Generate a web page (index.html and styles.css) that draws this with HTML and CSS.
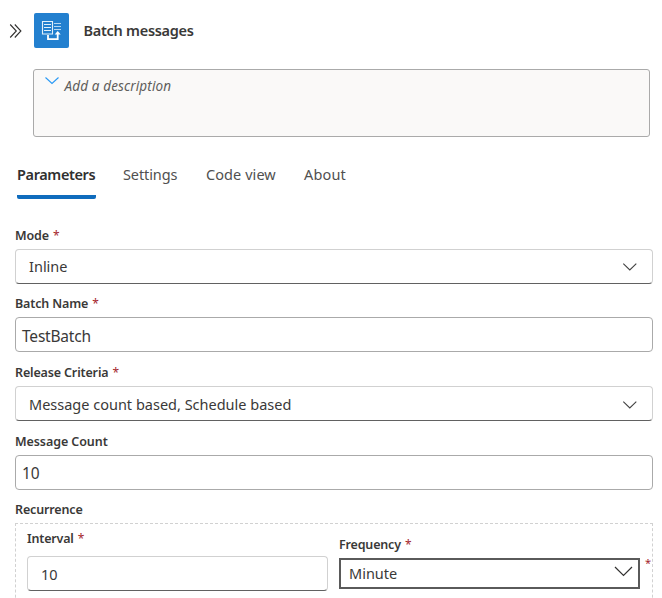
FILE: index.html
```html
<!DOCTYPE html>
<html lang="en">
<head>
<meta charset="utf-8">
<title>Batch messages</title>
<link rel="stylesheet" href="styles.css">
</head>
<body>
<main class="panel">
  <header class="header">
    <svg class="collapse" width="14" height="16" viewBox="0 0 14 16"><path d="M1.200 1.500 7.300 8 1.200 14.500M5.800 1.500 11.900 8 5.800 14.500"/></svg>
    <svg class="logo" width="35" height="35" viewBox="0 0 35 35">
      <rect width="35" height="35" rx="2" fill="#2380cf"/>
      <path d="M8.500 8.500h10v12.500h-10zM10 11.500h7M10 14.500h7M10 17.500h7" fill="none" stroke="#e2f0fb" stroke-width="1.100"/>
      <path d="M20 10.500h7M20 13.500h7M20 16.500h7" fill="none" stroke="#b5d7f2" stroke-width="1.200"/>
      <path d="M14 22v4.200h9.700V21" fill="none" stroke="#fff" stroke-width="1.800"/>
      <path d="M20.700 21.500 23.700 18l3 3.500z" fill="#fff"/>
    </svg>
    <h1 class="title">Batch messages</h1>
  </header>
  <div class="description">
    <svg class="desc-chevron" width="14" height="8" viewBox="0 0 14 8"><path d="M.5.5 7 6.500 13.500.5"/></svg>
    <span class="placeholder">Add a description</span>
  </div>
  <nav class="tabs">
    <span class="tab active">Parameters</span>
    <span class="tab settings">Settings</span>
    <span class="tab code">Code view</span>
    <span class="tab about">About</span>
  </nav>
  <form class="fields">
    <div class="label first"><span>Mode</span><b>*</b></div>
    <div class="control select mode"><span>Inline</span><svg class="chevron" width="15" height="8" viewBox="0 0 15 8"><path d="M1.300 .7 7.800 7 14.300 .7"/></svg></div>
    <div class="label"><span>Batch Name</span><b>*</b></div>
    <div class="control input"><span>TestBatch</span></div>
    <div class="label after-input"><span>Release Criteria</span><b>*</b></div>
    <div class="control select"><span>Message count based, Schedule based</span><svg class="chevron low" width="15" height="8" viewBox="0 0 15 8"><path d="M1.300 .7 7.800 7 14.300 .7"/></svg></div>
    <div class="label count"><span>Message Count</span></div>
    <div class="control input amount"><span>10</span></div>
    <div class="label"><span>Recurrence</span></div>
    <div class="recurrence">
      <div class="interval">
        <div class="sublabel"><span>Interval</span><b>*</b></div>
        <div class="control select narrow"><span>10</span></div>
      </div>
      <div class="frequency">
        <div class="sublabel"><span>Frequency</span><b>*</b></div>
        <div class="combo"><span>Minute</span><svg class="chevron dark" width="19" height="11" viewBox="0 0 19 11"><path d="M1 1 9.500 9.500 18 1"/></svg></div>
      </div>
      <span class="required">*</span>
    </div>
  </form>
</main>
</body>
</html>
```
FILE: styles.css
```css
* { box-sizing: border-box; }
body { margin: 0; background: #fff; color: #3a3938; font: 14.5px/20px "Noto Sans", "Open Sans", sans-serif; }
.panel { width: 662px; height: 598px; overflow: hidden; white-space: nowrap; }
svg { display: block; flex: none; fill: none; }
.header { display: flex; align-items: center; height: 61px; padding-left: 9px; }
.collapse { margin-right: 11px; stroke: #323130; stroke-width: 1.1; }
.title { margin: -2px 0 0 14.5px; font-size: 14.5px; font-weight: 600; letter-spacing: -.28px; }
.description { display: flex; width: 617px; height: 68px; margin: 8px 0 0 33px; padding: 7px 11px; border: 1px solid #aaa; border-radius: 3px; background: #faf9f8; }
.desc-chevron { margin-left: -.5px; stroke: #2899f5; stroke-width: 1.1; }
.placeholder { margin: -1px 0 0 6px; font-size: 13.5px; letter-spacing: .13px; font-style: italic; color: #605e5c; }
.tabs { display: flex; height: 62px; padding: 27px 0 0 17px; color: #505050; }
.tab { flex: none; height: 35px; }
.active { width: 79px; margin-right: 27px; border-bottom: 4px solid #0f6cbd; border-radius: 0 0 2px 2px; font-weight: 600; letter-spacing: -.38px; color: #303030; }
.settings { width: 83px; letter-spacing: -.1px; }
.code { width: 98px; letter-spacing: .07px; }
.about { letter-spacing: .15px; }
.fields { padding: 16px 9px 0 15px; }
.label { height: 33px; padding-top: 10px; font-size: 12.5px; font-weight: 600; letter-spacing: -.15px; }
.first { height: 34px; padding-top: 11px; }
.after-input, .count { height: 34px; padding-top: 11px; }
.count { letter-spacing: -.08px; }
b { margin-left: 4px; font-size: 12px; font-weight: 400; color: #a4262c; }
.control { display: flex; align-items: center; height: 35px; border: 1px solid #aaa; border-radius: 4px; }
.select { padding: 0 15px 0 13px; border-color: #d1d1d1; border-bottom-color: #616161; }
.mode { padding-bottom: 1px; }
.input { padding: 2px 6px 0; font-size: 15.5px; letter-spacing: -.2px; }
.amount { padding-top: 0; }
.chevron { margin: 1px 0 0 auto; stroke: #424242; stroke-width: 1.1; }
.low { margin-top: 2px; }
.recurrence { display: flex; height: 90px; padding: 5px 0 0 11px; border: 1px dashed #d1d1d1; }
.sublabel { font-size: 12.5px; font-weight: 600; letter-spacing: -.17px; }
.interval { width: 301px; }
.narrow { margin-top: 7px; }
.frequency { width: 301px; margin: 6px 0 0 11px; }
.combo { display: flex; align-items: center; height: 31px; margin-top: 3px; padding: 0 5px 2px 8px; border: 2px solid #5a5a5a; }
.dark { margin-top: -2px; stroke: #323130; stroke-width: 1.2; }
.required { margin: 24px 0 0 5px; font-size: 11px; color: #a4262c; }
```
